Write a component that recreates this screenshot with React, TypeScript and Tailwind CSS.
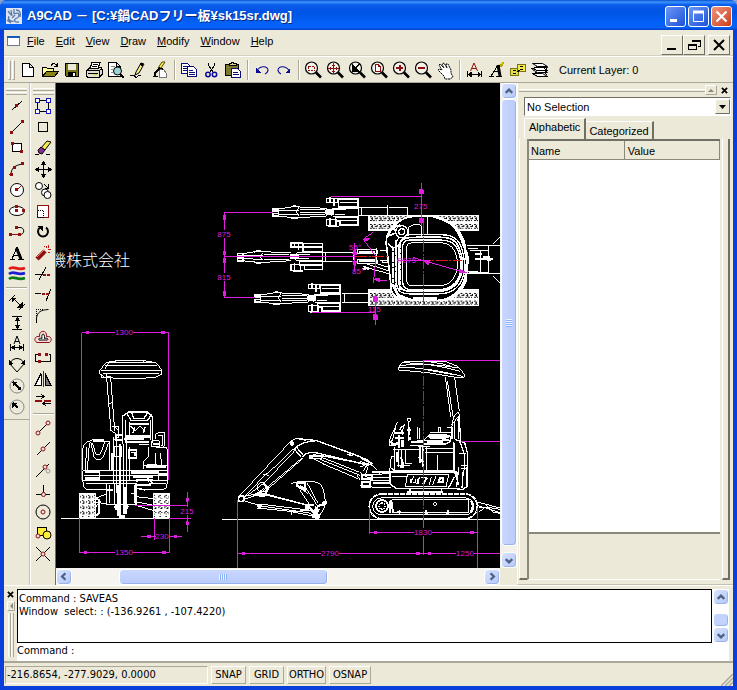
import React from "react";

const UI = "font-['Liberation_Sans','Noto_Sans_CJK_JP',sans-serif]";
const TAHOMA = "font-['DejaVu_Sans_Condensed','DejaVu_Sans',sans-serif]";

type Kids = { children?: React.ReactNode };

function Ico({ children }: Kids) {
  return (
    <svg viewBox="0 0 20 20" className="block h-5 w-5" fill="none" stroke="#000" strokeWidth="1" shapeRendering="crispEdges" aria-hidden="true">
      {children}
    </svg>
  );
}

function Lens({ children }: Kids) {
  return (
    <Ico>
      <g shapeRendering="auto">
        <circle cx="8.5" cy="8" r="6" fill="#f4f2e8" strokeWidth="1.2" />
        <path d="M13 12.5l5 5" strokeWidth="2.6" />
      </g>
      {children}
    </Ico>
  );
}

const RED = "#8e1010";

const fileIcons: [string, React.ReactNode][] = [
  ["New", <Ico><path d="M4.5 3.5h7l4 4v9h-11zM11.5 3.5v4h4" fill="#fff" /></Ico>],
  ["Open", <Ico><path d="M2.5 16.5v-9h4l1 1h6v3" fill="#ffff9c" /><path d="M2.5 16.5l4-5h12l-4 5z" fill="#8a8418" /><path d="M11 5.5c2-3 4-2 6 0M17.5 3v3.500h-3.500" /></Ico>],
  ["Save", <Ico><path d="M3.500 3.500h13v13h-12l-1-1z" fill="#77721c" /><path d="M6 4h8v6h-8z" fill="#ece9d8" stroke="none" /><path d="M6 12h8v5h-8z" fill="#000" stroke="none" /><path d="M11 13h2v3h-2z" fill="#fff" stroke="none" /></Ico>],
  ["Print", <Ico><path d="M3 10.500l3-3h11l1 2v5l-3 3h-11l-2-2v-4z" fill="#dedbd0" /><path d="M6 8.500l2-6h8l-2 6z" fill="#fff" /><path d="M9 4.500h5M8 6.500h5M3 10.500h12v6M4 13.500h10M15 11l3-3" /><path d="M10 14.500h3" stroke="#d8d000" /></Ico>],
  ["Print Preview", <Ico><path d="M2.500 2.500h8l4 4v10h-12zM10.500 2.500v4h4" fill="#fff" /><circle cx="11.500" cy="11" r="4" fill="#9fd3d6" shapeRendering="auto" /><path d="M14 14l4 4" strokeWidth="2.500" /><path d="M5 6.500h4M5 9.500h2M5 12.500h2" stroke="#8a8a8a" /></Ico>],
  ["Purge", <Ico><path d="M8 12l5-9 3 1-5 9-4 2z" fill="#f6f08a" shapeRendering="auto" /><path d="M12 4l3 1" strokeWidth="2" /><path d="M2 15.500h4l2 2 3-2h2" /></Ico>],
  ["Audit", <Ico><path d="M8 8l4-6h3l-4 6z" fill="#fff04a" stroke="#4a4600" shapeRendering="auto" /><path d="M9.500 9.500h4l3 4v4h-7z" fill="#fff" stroke="#777" /><path d="M9 9l-4 4v3M3 16.500h5M9 8l4 1" strokeWidth="1.500" /></Ico>],
];

const editIcons: [string, React.ReactNode][] = [
  ["Copy", <Ico><g stroke="#0b0b78"><path d="M2.500 3.500h6l3 3v7h-9z" fill="#fff" /><path d="M8.500 6.500h6l3 3v7h-9z" fill="#fff" /><path d="M4 6.500h4M4 8.500h5M4 10.500h4M10 10.500h4M10 12.500h6M10 14.500h6" /></g></Ico>],
  ["Cut", <Ico><path d="M7.500 2.500v3l5 7M13.500 2.500v3l-5 7" /><g stroke="#0b0b9a" shapeRendering="auto" strokeWidth="1.500"><circle cx="7" cy="14.500" r="2.200" /><circle cx="13.500" cy="14.500" r="2.200" /></g></Ico>],
  ["Paste", <Ico><path d="M2.500 4.500h13v11h-13z" fill="#7b7a2e" /><path d="M6 5.500v-2h2l1-1h1l1 1h2v2z" fill="#d9d48a" /><path d="M8.500 8.500h6l3 3v6h-9z" fill="#fff" stroke="#0b0b78" /><path d="M10 12.500h5M10 14.500h6" stroke="#0b0b78" /></Ico>],
];

const undoIcons: [string, React.ReactNode][] = [
  ["Undo", <Ico><path d="M5 11c2-5 10-6 11-1 0 2-1 3-3 4" stroke="#0b0b9a" shapeRendering="auto" strokeWidth="1.100" /><path d="M4 8v5h5z" fill="#0b0b9a" stroke="none" /></Ico>],
  ["Redo", <Ico><path d="M15 11c-2-5-10-6-11-1 0 2 1 3 3 4" stroke="#0b0b9a" shapeRendering="auto" strokeWidth="1.100" /><path d="M16 8v5h-5z" fill="#0b0b9a" stroke="none" /></Ico>],
];

const zoomIcons: [string, React.ReactNode][] = [
  ["Zoom Window", <Lens><path d="M5.500 6.500h6v4h-6z" stroke={RED} strokeDasharray="2 1" /></Lens>],
  ["Zoom Extents", <Lens><path d="M3 8.500h11M8.500 3v11" stroke={RED} strokeWidth="1.500" /><path d="M5.500 7v3M11.500 7v3M7 5.500h3M7 11.500h3" stroke={RED} /></Lens>],
  ["Zoom Previous", <Lens><path d="M5 4v8h8z" fill="#000" stroke="none" /><path d="M12 4l-5 6M7 9l5 3" strokeWidth="1.500" /></Lens>],
  ["Zoom Page", <Lens><path d="M6.500 4.500h3l2 2v5h-5z" fill="#fff" stroke={RED} /><path d="M9.500 4.500v2h2" stroke={RED} /></Lens>],
  ["Zoom In", <Lens><path d="M5 8h7M8.500 5v6" stroke={RED} strokeWidth="2" /></Lens>],
  ["Zoom Out", <Lens><path d="M5 8h7" stroke={RED} strokeWidth="2" /></Lens>],
  ["Pan", <Ico><path d="M9 16l-6-6 1-1 3 1-3-5 1-1 4 4-2-4 2-1 3 5-1-4 2 0 3 6v3l2 4-3 2h-5z" fill="#fff" shapeRendering="auto" strokeDasharray="2 .6" /></Ico>],
];

const formatIcons: [string, React.ReactNode][] = [
  ["Dimension Style", <Ico><path d="M6.500 11l3.500-8 3.500 8M8 8.500h4" stroke={RED} shapeRendering="auto" /><path d="M3.500 11v6M17.500 11v6M4 14.500h13" /><path d="M4 14.500l3-2v4zM17 14.500l-3-2v4z" fill="#000" /></Ico>],
  ["Text Style", <Ico><path d="M3 16.500h5M10 16.500h6M5 16l7-11M13 5l1 11M8 11.500h5" /><path d="M12 5l2 11" strokeWidth="3" shapeRendering="auto" /><path d="M14 6l3-4 1 1-3 4z" fill="#f0e800" stroke="#b5aa00" /></Ico>],
  ["Blocks", <Ico><path d="M2.500 8.500h8v7h-8z" fill="#e3dc4c" stroke="#77720c" /><path d="M9.500 4.500h8v7h-8z" fill="#f2ea4c" stroke="#77720c" /><path d="M5 10.500h3M5 13.500h3M12 6.500h3M12 9.500h3M9 12l3-2" /></Ico>],
  ["Layers", <Ico><g fill="#fff" shapeRendering="auto"><path d="M2.500 13.500h10l5 3h-10z" /><path d="M2.500 9.500l3-2h12l-3 3 3 2h-10z" /><path d="M2.500 3.500h10l5 3h-10z" /></g><path d="M7.500 6.500l-5 2 5 2h10M7.500 12.500l-5 1 5 3h10M17.500 6.500l-3 2 3 2-3 2 3 3" /></Ico>],
];

const D = ({ x, y }: { x: number; y: number }) => <rect x={x - 1} y={y - 1} width="3" height="3" fill={RED} stroke="none" />;
const O = ({ x, y }: { x: number; y: number }) => <circle cx={x} cy={y} r="2" fill="#f3e3dc" stroke={RED} shapeRendering="auto" />;

const drawIcons: [string, React.ReactNode][] = [
  ["Point", <Ico><path d="M5 14l10-9" /><D x={9} y={9} /></Ico>],
  ["Line", <Ico><path d="M5 15l11-11" /><D x={4} y={15} /><D x={15} y={4} /></Ico>],
  ["Rectangle", <Ico><path d="M5.500 5.500h9v8h-9z" fill="#fff" /><D x={5} y={5} /><D x={14} y={13} /></Ico>],
  ["Arc", <Ico><path d="M4 16c0-6 3-10 12-11" shapeRendering="auto" /><circle cx="4.500" cy="15.500" r="2" fill={RED} stroke="none" /><D x={7} y={8} /><D x={15} y={4} /></Ico>],
  ["Circle", <Ico><circle cx="10" cy="10" r="6.500" fill="#fff" shapeRendering="auto" /><path d="M10 10l4-4" stroke={RED} /><D x={9} y={9} /></Ico>],
  ["Ellipse", <Ico><ellipse cx="10" cy="10" rx="7.500" ry="4.500" fill="#fff" shapeRendering="auto" /><D x={9} y={9} /><D x={16} y={9} /><D x={9} y={5} /></Ico>],
  ["Polyline", <Ico><path d="M10 5.500h3c5 0 5 7 0 7" shapeRendering="auto" /><path d="M3 12.500h10" stroke={RED} /><D x={3} y={12} /><D x={12} y={12} /><D x={9} y={5} /></Ico>],
  ["Text", <Ico><path d="M3 16.500h5M11 16.500h6M5 16l5-12 5 12M7 12.500h6" /><path d="M9.500 5l4.500 11" strokeWidth="3" shapeRendering="auto" /></Ico>],
  ["Hatch", <Ico><g shapeRendering="auto" strokeWidth="2.800"><path d="M2 5c5-4 8 2 16-1" stroke="#e31818" /><path d="M2 10c5-4 8 2 16-1" stroke="#1c1cd0" /><path d="M2 15c5-4 8 2 16-1" stroke="#0c7a18" /></g></Ico>],
];

const dimIcons: [string, React.ReactNode][] = [
  ["Aligned Dimension", <Ico><path d="M2 9l6-6M12 18l6-6M6 6l8 8" /><path d="M5 6h4l-4 4zM15 15h-4l4-4z" fill="#000" /></Ico>],
  ["Vertical Dimension", <Ico><path d="M5 3.500h10M5 16.500h10M10.500 4v12" /><path d="M10.500 4l3 4h-6zM10.500 16l3-4h-6z" fill="#000" stroke="none" /></Ico>],
  ["Horizontal Dimension", <Ico><path d="M7 10l3-8 3 8M8 7.500h4" shapeRendering="auto" /><path d="M3.500 10v7M16.500 10v7M4 13.500h12" /><path d="M4 13.500l4-3v6zM16 13.500l-4-3v6z" fill="#000" stroke="none" /></Ico>],
  ["Angular Dimension", <Ico><path d="M3 9l7 8 7-8M3 8c3-6 11-6 14 0" shapeRendering="auto" /><path d="M2 10v-5l5 4zM18 10v-5l-5 4z" fill="#000" stroke="none" /></Ico>],
  ["Diameter Dimension", <Ico><circle cx="10" cy="10" r="7" stroke="#888" shapeRendering="auto" /><path d="M6 6l8 8" strokeWidth="1.500" /><path d="M6 6h4l-4 4zM14 14h-4l4-4z" fill="#000" stroke="none" /></Ico>],
  ["Radius Dimension", <Ico><circle cx="10" cy="10" r="7" stroke="#888" shapeRendering="auto" /><path d="M6 6l5 5" strokeWidth="1.500" /><path d="M5 6h5l-5 5z" fill="#000" stroke="none" /></Ico>],
];

const modifyIcons: [string, React.ReactNode][] = [
  ["Select", <Ico><path d="M4.500 4.500h11v11h-11z" stroke="#000" /><g fill="#fff" stroke="#1414c8"><path d="M2.500 2.500h4v4h-4zM13.500 2.500h4v4h-4zM2.500 13.500h4v4h-4zM13.500 13.500h4v4h-4z" /></g></Ico>],
  ["Deselect", <Ico><path d="M5.500 5.500h9v9h-9z" /></Ico>],
  ["Erase", <Ico><g shapeRendering="auto"><path d="M8 10l6-7 4 1-6 8z" fill="#f5e94a" /><path d="M5 12l3-3 4 3-3 4-3-1z" fill="#8a2a98" /></g><path d="M2 16.500h4M13 16.500h4" /></Ico>],
  ["Move", <Ico><path d="M10.500 3v15M3 10.500h15" /><path d="M10.500 2l3 4h-6zM10.500 19l3-4h-6zM2 10.500l4-3v6zM19 10.500l-4-3v6z" fill="#000" stroke="none" /></Ico>],
  ["Copy Objects", <Ico><g shapeRendering="auto" fill="#fff"><circle cx="6" cy="6" r="3.500" /><circle cx="12" cy="12.500" r="3.500" /><circle cx="14.500" cy="15" r="3.500" /></g><path d="M11 4l4 4M15.500 4v4h-4" /></Ico>],
  ["Scale", <Ico><path d="M4.500 4.500h11v12h-11z" fill="#fff" stroke={RED} /><path d="M4.500 9.500h6v7h-6z" strokeDasharray="1 1" /></Ico>],
  ["Rotate", <Ico><path d="M13 5.500a5 5 0 1 1-6 0" strokeWidth="2" shapeRendering="auto" /><path d="M4 4h6v6z" fill="#000" stroke="none" /></Ico>],
  ["Explode", <Ico><path d="M4 16l8-8" stroke={RED} strokeWidth="4.500" shapeRendering="auto" /><path d="M4 14l7-7" stroke="#ee7b72" /><path d="M13 3v2M16 2l-1 3M18 6l-3 1M17 10l-2-1M11 3v1" stroke="#c41818" /></Ico>],
  ["Trim", <Ico><path d="M6 16l7-13M2 10.500h8" /><path d="M10 10.500h7" stroke={RED} strokeWidth="2" strokeDasharray="3 1" /></Ico>],
  ["Extend", <Ico><path d="M13 16l5-12M2 8.500h6" /><path d="M9 8.500h7" stroke={RED} strokeWidth="2" strokeDasharray="3 1" /></Ico>],
  ["Fillet", <Ico><path d="M3.500 17v-5c1-6 4-8 12-8.500" shapeRendering="auto" /><path d="M3.500 10v-7M3 3.500h8" strokeDasharray="1 1" /></Ico>],
  ["Offset", <Ico><g shapeRendering="auto" stroke={RED}><path d="M4 15.500c-4-2-2-7 2.500-6-1-7 8-7 7 0 5-1 6 4 3 6z" fill="#f5dcd8" /><path d="M6 13c-1-2 1-2 3-1.500-1-6 3-6 2.500 0 3-1 4 .5 3 1.500z" fill="#fff" stroke="#000" /></g></Ico>],
  ["Break", <Ico><path d="M5 6.500h-2.500v7h15v-7h-2" /><D x={6} y={6} /><D x={13} y={6} /><D x={6} y={13} /></Ico>],
  ["Mirror", <Ico><path d="M2 16.500h6v-12z" fill="#fff" /><path d="M18 16.500h-6v-12z" fill="#777" /><path d="M10.500 2v16" stroke={RED} /></Ico>],
  ["Stretch", <Ico><path d="M3 6.500h8M8 4l3 2.500-3 2.500M18 13.500h-7M13 11l-3 2.500 3 2.500" /><path d="M2 10.500h16" stroke={RED} strokeWidth="2" strokeDasharray="7 2" /></Ico>],
];

const snapIcons: [string, React.ReactNode][] = [
  ["Endpoint", <Ico><path d="M5 15l10-10" /><O x={5} y={15} /><O x={15} y={5} /></Ico>],
  ["Midpoint", <Ico><path d="M4 16l13-13" /><O x={10} y={10} /></Ico>],
  ["Nearest", <Ico><path d="M3 17l13-13" /><O x={12} y={7} /><circle cx="15" cy="11" r="2" stroke="#999" shapeRendering="auto" /></Ico>],
  ["Perpendicular", <Ico><path d="M3 13.500h14M10.500 4v9" /><O x={10.5} y={13.5} /></Ico>],
  ["Center", <Ico><circle cx="10" cy="10" r="7" shapeRendering="auto" /><O x={10} y={10} /></Ico>],
  ["Insert", <Ico><path d="M4.500 4.500h9v8h-9z" fill="#ffee3a" /><circle cx="14" cy="12" r="4" fill="#ffee3a" shapeRendering="auto" /><O x={5} y={13} /></Ico>],
  ["Intersection", <Ico><path d="M3 3l14 14M3 17l14-14" /><O x={10} y={10} /></Ico>],
];

function Tools({ items, size }: { items: [string, React.ReactNode][]; size: string }) {
  return (
    <>
      {items.map(([name, icon]) => (
        <button key={name} type="button" aria-label={name} title={name} className={`flex shrink-0 items-center justify-center ${size}`}>
          {icon}
        </button>
      ))}
    </>
  );
}

const VSep = () => <div className="mr-0.5 ml-[3px] h-5 w-0.5 border-r border-l border-r-white border-l-[#aca899]" />;
const HSep = () => <div className="my-[3px] h-px w-[21px] shrink-0 bg-[#aca899] shadow-[0_1px_0_#fff]" />;
const ColumnGrip = () => (
  <>
    <div className="mb-px h-[3px] w-[21px] shrink-0 border-t border-b border-t-white border-b-[#aca899]" />
    <div className="h-[3px] w-[21px] shrink-0 border-t border-b border-t-white border-b-[#aca899]" />
  </>
);

/* ---------- drawing ---------- */

const MAG = "#de1ede";

function Label({ x, y, w = 18, children }: { x: number; y: number; w?: number; children: string }) {
  return (
    <g>
      <rect x={x - w / 2} y={y - 4} width={w} height="8" fill="#000" />
      <text x={x} y={y + 3} textAnchor="middle" fontSize="8" fill={MAG} className="font-['Liberation_Sans',sans-serif]">
        {children}
      </text>
    </g>
  );
}

function Arrow({ x, y, d }: { x: number; y: number; d: "l" | "r" | "u" | "d" }) {
  const p = { l: "l7-2v4z", r: "l-7-2v4z", u: "l-2 7h4z", d: "l-2-7h4z" }[d];
  return <path d={`M${x} ${y}${p}`} fill={MAG} />;
}

/* Boom and bucket seen from above, with the bucket tip at 0,0 */
function Boom() {
  return (
    <g>
      <path d="M0-10h16v6h-16zM0 4h16v8h-16zM4-4h12v8" strokeWidth="5" />
      <path d="M14-10l40-6h26l80 4M14 11l46 5h20l80-5M16-4l60-2M16 5l60 2M75-12l-6 12 6 10M50-14q14-12 26 0M50 15q14 10 26 0M80-8h75M80 8h75M80 0h90" />
      <path d="M158-8h24v14h-24z" fill="#fff" />
      <path d="M178-12l-10 12 10 12h77v-24zM182-8h36M185 6h30" />
      <path d="M196-16v-24h58v24zM200-30h54M160-42h34v12h-34zM170-46v18M182-44v24" strokeWidth="4" />
      <path d="M186 14h68v24h-54v-12h-14zM190 24h64M160 22h28v18h-28zM170 18v26M165 42h32" strokeWidth="4" />
    </g>
  );
}

function TopView() {
  return (
    <g transform="translate(220 180) scale(0.33333)" stroke="#fff" strokeWidth="3" fill="none">
      <g transform="translate(160 97)"><Boom /></g>
      <g transform="translate(53 231)"><Boom /></g>
      <g transform="translate(106 355)"><Boom /></g>
      <path d="M415 83h88v22M415 106h36M503 76v30M508 83h56v23M425 84v22" />
      <path d="M310 217h90M310 245h90M317 217v28M365 341h82M365 368h82M373 341v27" />
      <rect x="447" y="106" width="330" height="46" fill="url(#tread)" />
      <rect x="447" y="328" width="330" height="48" fill="url(#tread)" />
      <path d="M412 209h60v12h-60zM412 240h60v12h-60zM400 222v18M470 205v46l40 12M436 262l74 20M440 252l72 22M480 212h26v30h-26M488 240v8h22" />
      <path d="M430 258l16 10M428 268l20-6M416 216h50M416 244h50" strokeWidth="6" />
      <path d="M500 200c-6-30 10-60 30-68 20-28 90-28 120-20 40 6 60 30 72 58 18 36 24 78 14 116-6 36-34 66-70 74-34 4-100 2-124-6-20-4-28-14-28-28z" fill="#000" strokeWidth="5" />
      <path d="M528 190c6-28 34-26 64-26h70c50 0 60 24 68 60 8 36 4 68-14 92-20 24-44 26-76 26h-56c-34 0-50-2-54-28z" strokeWidth="4" />
      <path d="M537 196c4-24 28-24 55-24h70c44 0 54 20 62 54 8 34 2 62-14 84-18 22-40 24-70 24h-56c-30 0-43-2-47-24z" strokeWidth="5" />
      <path d="M548 200c0-20 14-20 32-20h76c44 0 54 14 64 50 8 32 0 60-14 78-14 18-34 22-60 22h-66c-24 0-32-8-32-28z" fill="#000" strokeWidth="4" />
      <path d="M560 206c0-16 10-18 22-18h72c36 0 48 14 56 44 6 28 0 50-12 66-12 16-28 20-50 20h-64c-20 0-24-6-24-22z" />
      <path d="M518 200v120M529 180v150M540 190v140" strokeWidth="6" strokeDasharray="14 2" />
      <path d="M500 170l25-10M505 190q20 30 40-10M505 165q10-25 35-30M520 145l30 30" strokeWidth="5" />
      <circle cx="545" cy="155" r="18" fill="#000" strokeWidth="4" />
      <circle cx="545" cy="155" r="9" strokeWidth="4" />
      <path d="M605 118v50M624 112v54M566 168v-26q20-14 38-6v32M640 112q70 10 90 90" />
      <path d="M650 112q60 14 82 76l10 60-6 56q-20 50-76 58" strokeWidth="8" />
      <path d="M520 318l14 28 40 14h70M580 356h70" strokeWidth="8" />
      <path d="M742 198h98M742 282h98M750 212h56v66h-60M806 198v84M782 212v66M745 205h30M745 275h30M818 192l22-22M818 288l22 20" />
      <path d="M764 222h22M764 238h56M790 230h20M800 240h12" strokeWidth="6" />
      <path d="M735 210c10 20 10 40 0 66" strokeWidth="9" />
      <g stroke="#e01818">
        <path d="M610 130v244" strokeDasharray="36 5 5 5" />
        <path d="M406 230h98M545 241h180" strokeDasharray="36 5 5 5" />
      </g>
      <g stroke={MAG}>
        <path d="M14 97h146M14 353h92M14 97v256M14 230h392M334 49h270M604 8v130M276 397h190M466 340v96M430 178l38 52-8 80M430 178l30-22M404 190v84M460 298l40 4M530 241h80M580 233l160 46" />
        <path d="M404 205l-6 18h12zM404 262l-6-18h12zM432 178l16-4-6 10zM462 298l18-4v12zM612 241l18 2-6 12zM740 279l-22-12v12zM598 30h12v12h-12zM598 115h12v14h-12zM460 350h12v14h-12zM460 405h12v14h-12zM10 106h8v12h-8zM10 214h8v10h-8zM10 236h8v12h-8zM10 334h8v12h-8z" fill={MAG} />
      </g>
    </g>
  );
}

function FrontView() {
  return (
    <g transform="translate(56 320) scale(0.33333)" stroke="#fff" strokeWidth="3" fill="none">
      <path d="M15 595h370" />
      <path d="M150 128l32-6h80l38 6 18 22v12l-20 10q-80 8-152 0l-14-10v-12zM148 138h154M134 152h184M160 127h130M140 160h170M146 148l14-22M180 122v6h84v-6M136 162v10h24" />
      <path d="M151 162l14 172M164 172l12 160M152 170h12M158 250l14-2M165 332l16 10M176 320l12 12v20l-14 8" />
      <path d="M168 320h20v12M180 345h20v16h-20z" strokeWidth="5" />
      <path d="M200 372v-84l18-12h56l16 14v80M212 280l14 22h48l14-20M226 276l8 20h30l10-18M220 312h60M220 306v40M208 300v70M284 300v60M222 318l16 14 14-14 14 14M230 340l6-20M262 340l6-20" strokeWidth="4" />
      <path d="M206 350h78M206 366h74M204 358h60" strokeWidth="7" />
      <path d="M80 450v-60q2-24 20-26l8-4q18-8 40 6l14-2v90M94 450l6-80M104 366l10 44q16 20 28 0l16-42M110 370l8 30q8 10 16 0l12-34M92 380l-4 70M160 372v78" />
      <path d="M110 361h34" strokeWidth="9" />
      <path d="M300 356v-14l10-4h16v40M306 348h14v26M316 376l18 10v64M300 384h34M288 362h22v18h-22zM278 380v30l-14 12v26M300 400v36M312 400l6 36h14M250 374h30M262 436l40-4M270 442h30" />
      <path d="M270 440h60M290 372h20" strokeWidth="7" />
      <path d="M80 452h256v30H80zM84 466h250M80 482l4 20 10 8h58M334 482l-2 20-8 6h-56M90 490h60M280 490h50M130 452v30M308 452v30" />
      <path d="M86 456h44M308 462h26M86 476h42M225 458h80M230 470h60M240 480h50" strokeWidth="7" />
      <path d="M172 350v140M182 346v174M192 372v218M202 372v210M212 360v150M220 380v100" strokeWidth="4" />
      <path d="M176 380h20v30h-20zM220 390h22v24h-22zM168 400v50M226 398h12v10" strokeWidth="5" />
      <path d="M152 490h88v64h-88zM160 496v54M176 490v64M236 496v54M152 510h20M226 520h14" strokeWidth="4" />
      <path d="M186 496v92M208 500v82M178 560l14 16M216 556l-10 20M190 590h18" strokeWidth="8" />
      <circle cx="184" cy="562" r="8" fill="#fff" />
      <circle cx="210" cy="562" r="6" fill="#fff" />
      <path d="M240 484q20-12 40 0M244 496h40M270 470l20 20M238 504l30 6" strokeWidth="5" />
      <path d="M240 530l54 6M244 546l50 10M240 556l54 16M120 534l32-12M120 546l32 6M120 560l14-16" />
      <rect x="70" y="522" width="49" height="72" fill="url(#wheel)" stroke="#fff" />
      <rect x="294" y="522" width="46" height="72" fill="url(#wheel)" stroke="#fff" />
      <path d="M76 524v68M94 524v68M112 524v68M300 524v68M318 524v68M334 524v68" strokeWidth="4" strokeDasharray="10 4" />
      <path d="M119 536l10 4v40l-10 8" strokeWidth="5" />
    </g>
  );
}

function ArmView() {
  return (
    <g transform="translate(220 350) scale(0.33333)" stroke="#fff" strokeWidth="3" fill="none">
      <path d="M5 508h835" />
      <path d="M58 438L214 272l16-8 28 8M66 448l70-52M74 440l62-66 14-10 78-74M136 396l92-98M60 452l64-22M120 430l126-106M140 420l110-96M128 372l18 4" />
      <path d="M222 296l22 26M228 290l22 26M230 266q34 2 60 6l110 40 48 20M224 296q20-22 66-24l108 40 50 20M248 322q10-20 48-12l84 20 66 16M270 318l40 0 136 26M380 312l20 6" strokeWidth="4" />
      <path d="M272 322l40 20M280 312l136 54M310 342l104 44M300 328l120 48M276 326l30 0M430 362l18-26M412 376l8 14M420 368l26 16" />
      <path d="M64 450l60 18 140 20 30 14M58 442l60-12 144 36M120 462l160 20M110 474l100 10 70 14M214 480v14M210 484l60-2M130 430l130 34M100 436l32-20" />
      <path d="M100 434l34 4M110 428l26 6M132 402l12 14-10 20" strokeWidth="7" />
      <circle cx="64" cy="446" r="9" fill="#000" strokeWidth="5" />
      <circle cx="118" cy="468" r="6" fill="#fff" />
      <circle cx="216" cy="280" r="6" fill="#fff" />
      <circle cx="273" cy="321" r="6" fill="#fff" />
      <circle cx="126" cy="412" r="14" />
      <path d="M214 400l24-6 48 2 18 8q16 40 10 66l-14 26-14 4M240 420l30 46M254 408l40 62M262 400l32 60M234 410l30 20" />
      <path d="M232 400h24v22l-24-14zM240 408l14 8M266 470l26 30M262 466h20M290 470l-12 34M296 476l-10 26" strokeWidth="7" />
      <circle cx="263" cy="471" r="7" fill="#fff" />
      <circle cx="291" cy="499" r="8" fill="#fff" />
      <circle cx="314" cy="459" r="6" fill="#fff" />
      <path d="M294 468l20-6" strokeWidth="7" />
    </g>
  );
}

function SideView() {
  return (
    <g transform="translate(360 350) scale(0.33333)" stroke="#fff" strokeWidth="3" fill="none">
      <path d="M115 60l4-16 16-10h120l40 16 20 26-6 8-20-2q-90-18-174-22zM120 46q90-8 176 8M130 38q90 2 170 26M118 52q90 0 192 28M160 34q60-2 110 14M204 60l76 14" />
      <path d="M256 80l16 120M284 84l14 100M262 92l18 112M290 190q-14 14-14 40l-4 20M280 200l14-14 6 10v50M274 226l22-28v70M284 214v54M292 206l10 34v32" />
      <circle cx="147" cy="209" r="5" />
      <path d="M147 216v58M112 216l-10 24-14 30 2 18h12M108 230l-12 44M116 240q10-14 20-14M120 230l8 24M134 222l-10 30M174 232v36M180 234v34M150 232l-4 30" />
      <path d="M104 250h28M106 264h26M118 256v38M128 270v22M100 286l16-8M92 272l8 14M140 240h14M144 266h10" strokeWidth="7" />
      <path d="M192 270l16-16h50l14 6v14l-14 8h-68zM204 258h66M210 264l56 4M196 272h74M210 248h62M236 246v-14h6v14M205 280h60M262 232h14v34M152 276h40M150 286l60 4" strokeWidth="4" />
      <path d="M206 262h60M200 276h50M170 274h20" strokeWidth="6" />
      <path d="M104 292v70h180v-84M94 320l10 0M94 320l-4 34v14M116 296v56M126 296v54M136 296v46h20M100 300h80M110 348h40M190 290v72M196 296h82M196 308h82M232 316v44M280 276v90M200 364v-72" />
      <path d="M112 306v30M122 320l8 24M180 290v50M176 320l10 14M120 350h12M190 290v60" strokeWidth="6" />
      <path d="M284 268l30 10 8 30v100l-12 10h-18M300 276l14 40v44M298 310h20M296 350l-6 60M304 346h18v10h-20M310 360l-4 54M320 350v60M284 366l12 40" strokeWidth="4" />
      <path d="M90 366h200v14M90 366v36l20 14h190M96 380h44M284 380l-20 36M90 352l20 14" strokeWidth="4" />
      <path d="M142 374h124l-8 36h-122zM152 398l10-20M158 398h10v-10M178 380l-4 22M184 382h16l-12 20M214 380l-6 24M218 404l10-26" />
      <path d="M154 388l-2 12M176 384l-4 18M200 384l-10 18M240 384h8v12h-12z" strokeWidth="6" />
      <path d="M150 418v8h94v-8M140 426h110" strokeWidth="4" />
      <path d="M0 334l40 14 10 12M0 350q20-6 24 4l-8 20M20 376l70-6M20 384h70M30 392h60M0 408h30l10 6h52M44 362l16 8" />
      <path d="M4 324l34 18M6 376h30v12H6zM6 396h24v14H6zM36 366h54M40 400h50" strokeWidth="6" />
      <rect x="28" y="432" width="324" height="74" rx="37" strokeWidth="5" strokeDasharray="16 2" />
      <rect x="38" y="444" width="304" height="50" rx="25" />
      <circle cx="66" cy="468" r="18" strokeWidth="5" />
      <circle cx="66" cy="468" r="9" strokeWidth="4" strokeDasharray="4 2" />
      <path d="M96 448h230v12M96 488h230v-28M90 452v36M98 456v32M326 450v40M118 480v12M264 480v12M198 480v12" strokeWidth="4" />
      <path d="M92 450l8 40M110 486h14M258 488h10M194 488h10" strokeWidth="6" />
      <circle cx="225" cy="462" r="5" />
      <path d="M332 452q12 16 0 34" strokeWidth="6" />
      <path d="M352 456l68 18M352 466l68 22M356 474h40l24 4M380 466l20 20 20 4M356 486l20-14" />
      <path d="M190 32v486" stroke="#e01818" strokeDasharray="30 5 5 5" />
    </g>
  );
}

function Drawing() {
  return (
    <svg viewBox="56 83 444 486" preserveAspectRatio="xMinYMin slice" className="block h-full w-full bg-black" shapeRendering="crispEdges" role="img" aria-label="Excavator drawing">
      <defs>
        <pattern id="tread" width="26" height="23" patternUnits="userSpaceOnUse" x="447" y="106">
          <rect width="26" height="23" fill="#fff" />
          <path d="M3 4h7M13 4h8M6 11h3M16 11h6M2 17h6M12 17h4M20 16h3M11 7v6M24 6v6" stroke="#000" strokeWidth="3" />
        </pattern>
        <pattern id="wheel" width="18" height="16" patternUnits="userSpaceOnUse" x="70" y="522">
          <rect width="18" height="16" fill="#fff" />
          <path d="M6 3h7M4 9h3M11 8h3M8 13h6M2 6h3" stroke="#000" strokeWidth="3" />
        </pattern>
      </defs>
      <text x="130" y="266" textAnchor="end" fontSize="16" fill="#fff" className="font-['Noto_Sans_CJK_JP',sans-serif] font-light">機株式会社</text>
      <TopView />
      <FrontView />
      <ArmView />
      <SideView />
      <g stroke={MAG}>
        <path d="M81.500 332.500h87M81.500 332.500v147M168.500 332.500v147" />
        <path d="M79.500 518v35M169.500 518v35M79.500 552.500h90M154.500 518v22M141 536.500h41M135 505.500h53M169 518.500h22M187.500 492v40" />
        <path d="M237.500 500v69M237.500 553.500h263M423.500 520v35M369.500 508v26M477.500 508v61M369.500 532.500h108M423 360.500h77M461 441.500h39" />
      </g>
      <Arrow x={82} y={332.5} d="l" /><Arrow x={168} y={332.5} d="r" />
      <Arrow x={80} y={552.5} d="l" /><Arrow x={169} y={552.5} d="r" />
      <Arrow x={154} y={536.5} d="r" /><Arrow x={170} y={536.5} d="l" />
      <Arrow x={187.5} y={505} d="d" /><Arrow x={187.5} y={518} d="u" />
      <Arrow x={238} y={553.5} d="l" /><Arrow x={423} y={553.5} d="r" /><Arrow x={424} y={553.5} d="l" />
      <Arrow x={370} y={532.5} d="l" /><Arrow x={477} y={532.5} d="r" />
      <Label x={124} y={332}>1300</Label>
      <Label x={124} y={552}>1350</Label>
      <Label x={162} y={536} w={13}>230</Label>
      <Label x={187} y={511} w={13}>215</Label>
      <Label x={330} y={553}>2790</Label>
      <Label x={423} y={532}>1830</Label>
      <Label x={465} y={553}>1250</Label>
      <Label x={224} y={234} w={13}>875</Label>
      <Label x={224} y={277} w={13}>815</Label>
      <g fontSize="8" fill={MAG} className="font-['Liberation_Sans',sans-serif]">
        <text x="414" y="209">275</text>
        <text x="368" y="312">115</text>
        <text x="397" y="263">R875</text>
        <text x="349" y="250">55°</text>
        <text x="352" y="274">85°</text>
      </g>
      <path d="M323 568.500h20M347 568.500h4M355 568.500h10M377 568.500h14" stroke={MAG} strokeWidth="2" strokeDasharray="2 1 1 2" />
    </svg>
  );
}

/* ---------- scrollbars ---------- */

const chevrons = { up: "M4 9l3.500-3.500L11 9", down: "M4 6l3.500 3.500L11 6", left: "M9 4L5.500 7.500 9 11", right: "M6 4l3.500 3.500L6 11" };

function ScrollBtn({ dir }: { dir: keyof typeof chevrons }) {
  return (
    <button type="button" aria-label={`Scroll ${dir}`} className="flex h-4 w-4 shrink-0 items-center justify-center rounded-sm border border-white bg-linear-to-br from-[#d6e2ff] to-[#b5c9f7] shadow-[inset_-1px_-1px_0_#9cb4e8]">
      <svg viewBox="0 0 15 15" className="h-[15px] w-[15px]" fill="none" stroke="#4d6185" strokeWidth="2.500">
        <path d={chevrons[dir]} />
      </svg>
    </button>
  );
}

const THUMB = "flex items-center justify-center rounded-sm border border-white shadow-[inset_-1px_-1px_0_#98b2ec]";

/* ---------- window ---------- */

function CaptionBtn({ label, tone, children }: Kids & { label: string; tone: string }) {
  return (
    <button type="button" aria-label={label} className={`flex h-[21px] w-[21px] items-center justify-center rounded-[3px] border border-white ${tone}`}>
      <svg viewBox="0 0 19 19" className="h-[19px] w-[19px]" fill="none" stroke="#fff">{children}</svg>
    </button>
  );
}

function ChildBtn({ label, children }: Kids & { label: string }) {
  return (
    <button type="button" aria-label={label} className="flex h-5 w-[22px] items-center justify-center border border-t-white border-r-[#716f64] border-b-[#716f64] border-l-white bg-[#ece9d8]">
      <svg viewBox="0 0 20 18" className="h-[18px] w-5" fill="none" stroke="#000" shapeRendering="crispEdges">{children}</svg>
    </button>
  );
}

const menus = ["File", "Edit", "View", "Draw", "Modify", "Window", "Help"];
const modes = ["SNAP", "GRID", "ORTHO", "OSNAP"];

export default function App() {
  return (
    <div className={`flex h-screen flex-col overflow-hidden bg-[#8aa0cf] text-[11px] leading-[14px] text-black ${UI}`}>
      <div className="flex min-h-0 flex-1 flex-col overflow-hidden rounded-t-[7px] bg-[#0a3fdc]">
        <header className="flex h-[30px] shrink-0 items-center bg-[linear-gradient(#0a4fd0_0%,#3d95ff_7%,#0a5cec_16%,#0054e3_40%,#0462fa_80%,#0560f5_92%,#0340c8_100%)] pt-0.5 pr-[5px] pl-[6px]">
          <svg viewBox="0 0 16 16" className="mr-[5px] h-4 w-4" aria-hidden="true">
            <rect width="16" height="16" fill="#dfe6f2" />
            <path d="M2 3l3 4M5 2l1 6M8 1v5M3 8c-2 4 2 6 5 5M8 6c6-3 6 3 3 4s-4 5 2 4M10 2c4 0 5 3 4 7M6 10l3-3M1 12l4 3" fill="none" stroke="#5878a8" strokeWidth="1.300" />
          </svg>
          <h1 className="text-[13px] leading-[18px] font-bold whitespace-pre text-white [text-shadow:1px_1px_0_#0a2a80]">A9CAD － [C:¥鍋CADフリー板¥sk15sr.dwg]</h1>
          <div className="ml-auto flex gap-0.5">
            <CaptionBtn label="Minimize" tone="bg-linear-to-br from-[#6c97f5] to-[#1c4fd8]"><path d="M4 13.500h7" strokeWidth="3" /></CaptionBtn>
            <CaptionBtn label="Maximize" tone="bg-linear-to-br from-[#6c97f5] to-[#1c4fd8]"><path d="M4.500 5v9.500h10V5" /><path d="M4 5h11" strokeWidth="3" /></CaptionBtn>
            <CaptionBtn label="Close" tone="bg-linear-to-br from-[#f0937a] to-[#c93a14]"><path d="M4.500 4.500l10 10M14.500 4.500l-10 10" strokeWidth="2.200" /></CaptionBtn>
          </div>
        </header>

        <div className="mx-1 mb-1 flex min-h-0 flex-1 flex-col bg-[#ece9d8]">
          <div className="flex h-[26px] shrink-0 items-center border-b border-[#d5d1c0] px-[3px]">
            <svg viewBox="0 0 13 10" className="mr-[7px] mb-1 h-[10px] w-[13px]" shapeRendering="crispEdges" aria-hidden="true">
              <rect x=".5" y=".5" width="12" height="9" fill="#fff" stroke="#6a7a90" />
              <path d="M0 1h13" stroke="#1458b8" strokeWidth="2" />
            </svg>
            <nav className="mb-1 flex gap-[11px]">
              {menus.map((m) => (
                <button key={m} type="button"><span className="underline">{m[0]}</span>{m.slice(1)}</button>
              ))}
            </nav>
            <div className="mt-1 ml-auto flex">
              <ChildBtn label="Minimize drawing"><path d="M5 13h9" strokeWidth="2" /></ChildBtn>
              <ChildBtn label="Restore drawing"><path d="M8.500 6v-2h8v6h-3M4.500 8.500h8v5h-8z" /><path d="M8 4.500h9M4 8.500h9" strokeWidth="2" /></ChildBtn>
              <div className="ml-[3px]"><ChildBtn label="Close drawing"><path d="M5 4l10 10M15 4l-10 10" strokeWidth="2" shapeRendering="auto" /></ChildBtn></div>
            </div>
          </div>

          <div className="flex h-[27px] shrink-0 items-center border-t border-b border-t-white border-b-[#aca899]">
            <div className="mr-0.5 ml-1 flex h-5 gap-px">
              <div className="w-[3px] border border-t-white border-r-[#aca899] border-b-[#aca899] border-l-white" />
              <div className="w-[3px] border border-t-white border-r-[#aca899] border-b-[#aca899] border-l-white" />
            </div>
            <Tools items={fileIcons} size="w-[22px] h-6" />
            <VSep />
            <Tools items={editIcons} size="w-[22px] h-6" />
            <VSep />
            <Tools items={undoIcons} size="w-[22px] h-6" />
            <VSep />
            <Tools items={zoomIcons} size="w-[22px] h-6" />
            <VSep />
            <Tools items={formatIcons} size="w-[22px] h-6" />
            <span className="ml-2 whitespace-nowrap">Current Layer: 0</span>
          </div>

          <div className="flex min-h-0 flex-1">
            <div className="flex w-[26px] shrink-0 flex-col items-center border-r border-r-[#c5c1b0]">
              <div className="flex w-full flex-col items-center border-b border-[#aca899] pt-[5px] pb-0.5">
                <ColumnGrip />
                <Tools items={drawIcons} size="w-6 h-[21px]" />
                <HSep />
                <Tools items={dimIcons} size="w-6 h-[21px]" />
              </div>
            </div>
            <div className="flex w-[26px] shrink-0 flex-col items-center border-r border-l border-r-[#716f64] border-l-white pt-[5px]">
              <ColumnGrip />
              <Tools items={modifyIcons} size="w-6 h-[21px]" />
              <HSep />
              <Tools items={snapIcons} size="w-6 h-[21px]" />
            </div>

            <main className="flex min-w-0 flex-1 flex-col">
              <div className="flex min-h-0 flex-1">
                <div className="min-w-0 flex-1"><Drawing /></div>
                <div className="flex w-[17px] flex-col items-center bg-[#f3f1ec]">
                  <ScrollBtn dir="up" />
                  <div className={`${THUMB} mb-1.5 w-4 flex-1 bg-linear-to-r from-[#c9d7ff] to-[#b9cbfa]`}>
                    <div className="h-2 w-1.5 bg-[repeating-linear-gradient(#eef4ff_0_1px,#8cb0f8_1px_2px)]" />
                  </div>
                  <ScrollBtn dir="down" />
                </div>
              </div>
              <div className="flex h-[17px] items-center">
                <div className="flex h-full min-w-0 flex-1 items-center bg-[#f6f4ef]">
                  <ScrollBtn dir="left" />
                  <div className="h-full w-[47px]" />
                  <div className={`${THUMB} h-4 w-[47%] bg-linear-to-b from-[#c9d7ff] to-[#b9cbfa]`}>
                    <div className="h-1.5 w-2 bg-[repeating-linear-gradient(90deg,#eef4ff_0_1px,#8cb0f8_1px_2px)]" />
                  </div>
                  <div className="ml-auto"><ScrollBtn dir="right" /></div>
                </div>
                <div className="w-[17px]" />
              </div>
            </main>

            <aside className="flex w-[216px] shrink-0 flex-col border-b border-l border-b-[#c5c1b0] border-l-white">
              <div className="flex h-[14px] items-center pr-0.5">
                <div className="ml-px h-[3px] flex-1 border-t border-b border-t-white border-b-[#aca899]" />
                <button type="button" aria-label="Collapse panel" className="flex h-2.5 w-3 items-center justify-center border border-t-white border-r-[#aca899] border-b-[#aca899] border-l-white">
                  <svg viewBox="0 0 6 4" className="h-1 w-1.5"><path d="M0 4l3-3 3 3z" fill="#8a887c" /></svg>
                </button>
                <button type="button" aria-label="Close panel" className="flex h-3 w-3.5 items-center justify-center">
                  <svg viewBox="0 0 8 8" className="h-[7px] w-[7px]" stroke="#000" strokeWidth="2"><path d="M1 1l6 6M7 1l-6 6" /></svg>
                </button>
              </div>
              <div className="relative mr-0.5 ml-1.5 h-[19px]">
                <select aria-label="Selection" defaultValue="No Selection" className={`h-full w-full appearance-none border border-t-[#716f64] border-r-white border-b-white border-l-[#716f64] bg-white pl-0.5 text-[11px] leading-[14px] ${UI}`}>
                  <option>No Selection</option>
                </select>
                <div className="pointer-events-none absolute top-0.5 right-px bottom-0.5 flex w-[15px] items-center justify-center border border-t-white border-r-[#716f64] border-b-[#716f64] border-l-white bg-[#ece9d8]">
                  <svg viewBox="0 0 7 4" className="h-1 w-[7px]"><path d="M0 0h7L3.500 4z" /></svg>
                </div>
              </div>
              <div role="tablist" className="ml-1.5 flex h-[23px] items-end">
                <button role="tab" aria-selected="true" type="button" className="h-[21px] border-t border-r-2 border-l border-t-white border-r-[#716f64] border-l-white px-1 pb-1">Alphabetic</button>
                <button role="tab" aria-selected="false" type="button" className="h-[18px] border-t border-r-2 border-t-white border-r-[#716f64] px-[3px]">Categorized</button>
              </div>
              <div className="flex min-h-0 flex-1 pr-[3px] pb-1 pl-px">
                <div className="w-2 border-b-2 border-l border-b-[#716f64] border-l-white" />
                <div className="flex min-w-0 flex-1 flex-col border-b border-l-2 border-b-white border-l-[#8a887a]">
                  <div className="flex-1 border-t-2 border-b-2 border-t-[#716f64] border-b-[#8a887a] bg-white">
                    <table className="w-full table-fixed border-collapse text-left">
                      <thead>
                        <tr className="h-[19px] bg-[#ece9d8] shadow-[inset_0_-1px_0_#8a887a]">
                          <th className="border-r border-[#8a887a] px-0.5 font-normal">Name</th>
                          <th className="border-r border-[#8a887a] px-[3px] font-normal">Value</th>
                        </tr>
                      </thead>
                    </table>
                  </div>
                  <div className="h-[45px]" />
                </div>
                <div className="ml-0.5 w-2 border-r-2 border-b-2 border-l border-r-[#716f64] border-b-[#716f64] border-l-white" />
              </div>
            </aside>
          </div>

          <section className={`flex h-[78px] shrink-0 border-t border-b-2 border-t-white border-b-[#aca899] pt-[3px] pr-1 ${TAHOMA}`}>
            <div className="flex w-[13px] shrink-0 flex-col items-center gap-0.5">
              <button type="button" aria-label="Close command window" className="flex h-2.5 w-2.5 items-center justify-center">
                <svg viewBox="0 0 8 8" className="h-[7px] w-[7px]" stroke="#000" strokeWidth="2"><path d="M1 1l6 6M7 1l-6 6" /></svg>
              </button>
              <button type="button" aria-label="Collapse command window" className="flex h-2.5 w-2 items-center justify-center border border-t-white border-r-[#aca899] border-b-[#aca899] border-l-white">
                <svg viewBox="0 0 4 6" className="h-1.5 w-1"><path d="M4 0v6L1 3z" fill="#8a887c" /></svg>
              </button>
              <div className="mb-1 w-[6px] flex-1 border-r border-l border-r-[#aca899] border-l-white bg-[linear-gradient(90deg,#ece9d8_1px,#aca899_1px_2px,#fff_2px_3px,#ece9d8_3px)]" />
            </div>
            <div className="flex min-w-0 flex-1 flex-col bg-white">
              <div className="flex h-[54px]">
                <textarea aria-label="Command history" readOnly className="min-w-0 flex-1 resize-none overflow-hidden border border-black bg-white p-px pt-0.5 text-[11px] leading-[13px]" defaultValue={"Command : SAVEAS\nWindow  select: : (-136.9261 , -107.4220)"} />
                <div className="flex w-[17px] flex-col items-end">
                  <ScrollBtn dir="up" />
                  <div className="flex-1" />
                  <div className={`${THUMB} h-3.5 w-4 bg-[#c3d3fd]`} />
                  <ScrollBtn dir="down" />
                </div>
              </div>
              <label className="flex h-[15px] items-center">
                <span>Command :</span>
                <input type="text" className="min-w-0 flex-1 bg-transparent pl-1 outline-none" />
              </label>
            </div>
          </section>

          <footer className={`flex h-[23px] shrink-0 items-center gap-[3px] pl-px ${TAHOMA}`}>
            <output className="h-[18px] w-[203px] border border-t-[#aca899] border-r-white border-b-white border-l-[#aca899] pl-px leading-4 whitespace-nowrap">-216.8654, -277.9029, 0.0000</output>
            {modes.map((m) => (
              <button key={m} type="button" className={`h-[18px] border border-t-white border-r-[#aca899] border-b-[#aca899] border-l-white text-center ${m === "OSNAP" ? "w-[42px]" : m === "ORTHO" ? "w-[39px]" : "w-[35px]"}`}>{m}</button>
            ))}
            <svg viewBox="0 0 12 12" className="ml-auto h-3 w-3 self-end" stroke="#aca899" strokeWidth="1.500" aria-hidden="true">
              <path d="M0 12L12 0M4 12l8-8M8 12l4-4" />
            </svg>
          </footer>
        </div>
      </div>
    </div>
  );
}
